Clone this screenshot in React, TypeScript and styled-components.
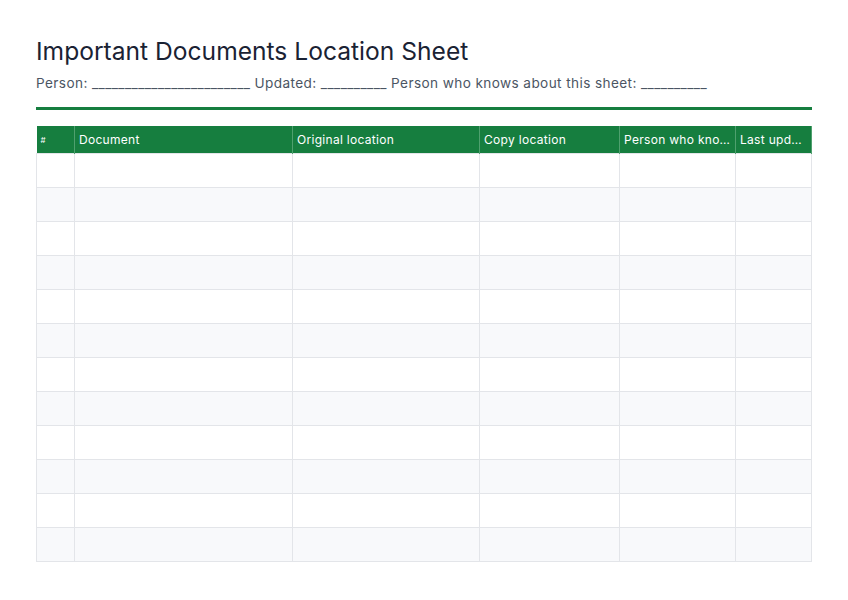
import styled, { createGlobalStyle } from "styled-components";

const Global = createGlobalStyle`
  body {
    margin: 0;
    background: #fff;
    font-family: Inter, "Noto Sans", sans-serif;
  }
`;

const Page = styled.div`
  padding: 34px 36px 0 36px;
  width: 776px;
`;

const Title = styled.h1`
  margin: 0;
  font-size: 24.6px;
  font-weight: 400;
  color: #1a2233;
  line-height: 34px;
`;

const Meta = styled.div`
  margin-top: 6px;
  font-size: 13.6px;
  color: #4b5563;
  line-height: 18px;
  letter-spacing: 0.4px;
`;

const Rule = styled.div`
  margin-top: 15px;
  height: 3px;
  background: #167e3f;
`;

const Table = styled.table`
  margin-top: 16px;
  width: 776px;
  border-collapse: collapse;
  table-layout: fixed;
`;

const Th = styled.th<{ $small?: boolean }>`
  background: #167e3f;
  color: #fff;
  font-weight: 400;
  font-size: ${(p) => (p.$small ? "8px" : "12px")};
  letter-spacing: 0.3px;
  text-align: left;
  height: 27px;
  padding: 0 4px;
  white-space: nowrap;
  overflow: hidden;
  text-overflow: ellipsis;
  border-right: 1px solid #4fa06e;
`;

const Row = styled.tr<{ $alt: boolean }>`
  background: ${(p) => (p.$alt ? "#f8f9fb" : "#fff")};
`;

const Td = styled.td`
  height: 34px;
  padding: 0;
  box-sizing: border-box;
  border: 1px solid #e3e5e9;
`;

const cols = [
  { name: "#", w: 38 },
  { name: "Document", w: 218 },
  { name: "Original location", w: 187 },
  { name: "Copy location", w: 140 },
  { name: "Person who knows", w: 116 },
  { name: "Last updated", w: 76 },
];

export default function App() {
  return (
    <>
      <Global />
      <Page>
        <Title>Important Documents Location Sheet</Title>
        <Meta>
          Person: ________________________ Updated: __________ Person who knows about this sheet: __________
        </Meta>
        <Rule />
        <Table>
          <colgroup>
            {cols.map((c) => (
              <col key={c.name} style={{ width: c.w }} />
            ))}
          </colgroup>
          <thead>
            <tr>
              {cols.map((c, i) => (
                <Th key={c.name} $small={i === 0}>
                  {c.name}
                </Th>
              ))}
            </tr>
          </thead>
          <tbody>
            {Array.from({ length: 12 }).map((_, r) => (
              <Row key={r} $alt={r % 2 === 1}>
                {cols.map((c) => (
                  <Td key={c.name} />
                ))}
              </Row>
            ))}
          </tbody>
        </Table>
      </Page>
    </>
  );
}
